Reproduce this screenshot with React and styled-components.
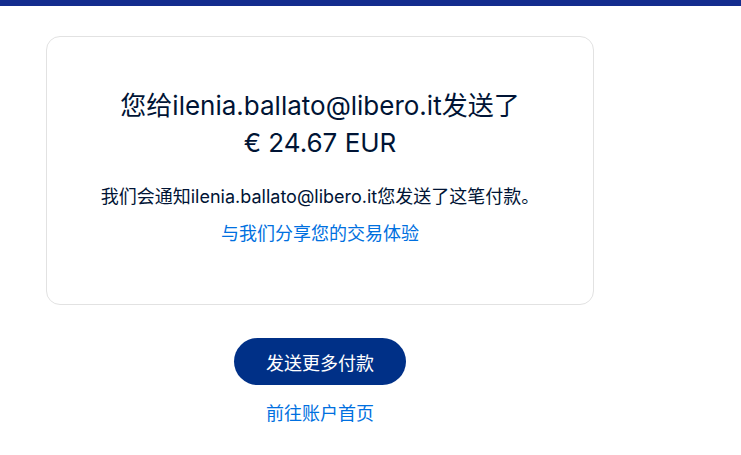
import React from "react";
import styled, { createGlobalStyle } from "styled-components";

const GlobalStyle = createGlobalStyle`
  body {
    margin: 0;
    background: #ffffff;
    font-family: Inter, "Noto Sans CJK SC", sans-serif;
  }
`;

const TopBar = styled.div`
  height: 6px;
  background: #142c8e;
`;

const Main = styled.main`
  width: 548px;
  margin-left: 46px;
  padding-top: 30px;
  display: flex;
  flex-direction: column;
  align-items: center;
`;

const Card = styled.section`
  box-sizing: border-box;
  width: 100%;
  height: 269px;
  border: 1px solid #e2e2e2;
  border-radius: 14px;
  padding: 50px 10px 0;
  display: flex;
  flex-direction: column;
  align-items: center;
  text-align: center;
`;

const Title = styled.h1`
  margin: 0;
  font-size: 26px;
  line-height: 37px;
  font-weight: 400;
  color: #001435;
`;

const Note = styled.p`
  margin: 22px 0 0;
  font-size: 18px;
  line-height: 27px;
  color: #001435;
  white-space: nowrap;
`;

const TextLink = styled.a`
  display: block;
  margin-top: ${(props) => props.gap || "10px"};
  font-size: 18px;
  line-height: 27px;
  color: #0070e0;
  text-decoration: none;
  cursor: pointer;
`;

const PrimaryButton = styled.button`
  margin-top: 33px;
  width: 172px;
  height: 47px;
  border: none;
  border-radius: 24px;
  background: #003087;
  color: #ffffff;
  font-family: Inter, "Noto Sans CJK SC", sans-serif;
  font-size: 18px;
  cursor: pointer;
`;

const App = () => {
  return (
    <>
      <GlobalStyle />
      <TopBar />
      <Main>
        <Card>
          <Title>
            您给ilenia.ballato@libero.it发送了
            <br />€ 24.67 EUR
          </Title>
          <Note>我们会通知ilenia.ballato@libero.it您发送了这笔付款。</Note>
          <TextLink>与我们分享您的交易体验</TextLink>
        </Card>
        <PrimaryButton>发送更多付款</PrimaryButton>
        <TextLink gap="15px">前往账户首页</TextLink>
      </Main>
    </>
  );
};

export default App;
